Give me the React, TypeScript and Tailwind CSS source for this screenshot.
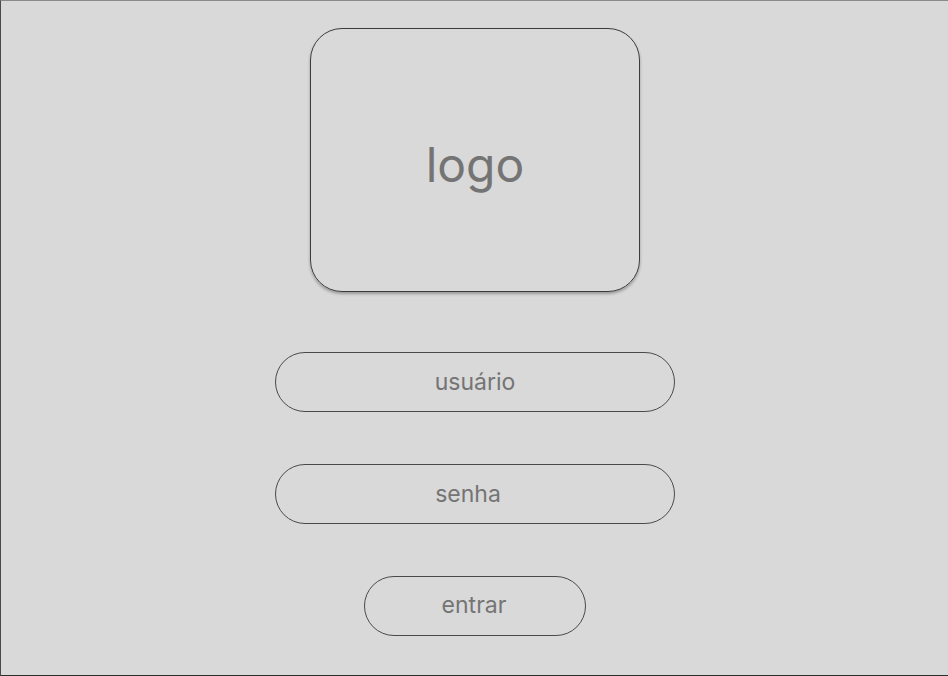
export default function App() {
  return (
    <div className="h-[676px] w-[948px] bg-[#d9d9d9] border-t border-t-[#8a8a8a] border-l border-l-[#4a4a4a] border-b border-b-[#2e2e2e] font-['Inter','Noto_Sans',sans-serif] text-[#747474] overflow-hidden">
      <div className="flex flex-col items-center pt-[27px] pl-[1px]">
        {/* logo */}
        <div className="flex h-[264px] w-[330px] items-center justify-center rounded-[32px] border border-[#3c3c3c] shadow-[0_2px_3px_rgba(0,0,0,0.3)]">
          <span className="text-[48px] leading-none mt-[10px]">logo</span>
        </div>

        {/* campos */}
        <div className="mt-[60px] flex h-[60px] w-[400px] items-center justify-center rounded-full border border-[#4a4a4a]">
          <span className="text-[23px]">usuário</span>
        </div>
        <div className="mt-[52px] flex h-[60px] w-[400px] items-center justify-center rounded-full border border-[#4a4a4a]">
          <span className="text-[23px] -ml-[14px]">senha</span>
        </div>

        <div className="mt-[52px] flex h-[60px] w-[222px] items-center justify-center rounded-full border border-[#4a4a4a]">
          <span className="text-[23px] -ml-[2px] -mt-[1px]">entrar</span>
        </div>
      </div>
    </div>
  );
}
